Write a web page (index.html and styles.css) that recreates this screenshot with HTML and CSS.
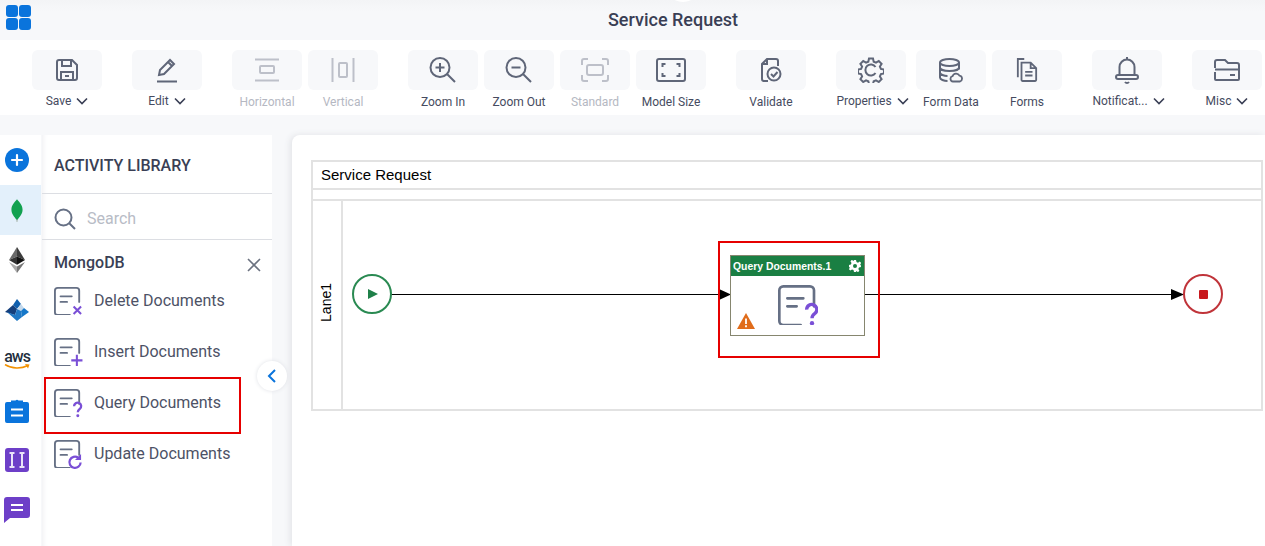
FILE: index.html
```html
<!DOCTYPE html>
<html lang="en">

<head>
    <meta charset="UTF-8">
    <title>Service Request</title>
    <link rel="stylesheet" href="styles.css">
</head>

<body>
    <svg class="defs" width="0" height="0">
        <symbol id="doc" viewBox="0 0 30 30">
            <path d="M27 16V4a3 3 0 0 0-3-3H4a3 3 0 0 0-3 3v23a3 3 0 0 0 3 3h13M7 10h12M7 16h7" fill="none" stroke="#667085" stroke-width="2" stroke-linecap="round" />
        </symbol>
        <symbol id="chev" viewBox="0 0 12 8">
            <path d="M1 1.500l5 5 5-5" fill="none" stroke="#3a3f55" stroke-width="1.600" />
        </symbol>
    </svg>

    <header class="topbar">
        <svg class="apps" width="26" height="26" viewBox="0 0 26 26">
            <rect x="0" y="0" width="12" height="12" rx="3" />
            <rect x="13" y="0" width="12" height="12" rx="3" />
            <rect x="0" y="13" width="12" height="12" rx="3" />
            <rect x="13" y="13" width="12" height="12" rx="3" />
        </svg>
        <div class="title">Service Request</div>
        <span class="handle"></span>
    </header>

    <nav class="toolbar">
        <div class="group">
            <div class="tool">
                <div class="tool-btn">
                    <svg width="24" height="24" viewBox="0 0 24 24">
                        <path d="M2 4a2 2 0 0 1 2-2h13l5 5v13a2 2 0 0 1-2 2H4a2 2 0 0 1-2-2zM7 2v6h9V2M6 22v-8h12v8M10 18h4" />
                    </svg>
                </div>
                <div class="tool-label drop">Save <svg class="chev" width="12" height="8"><use href="#chev" /></svg></div>
            </div>
        </div>
        <div class="group">
            <div class="tool">
                <div class="tool-btn">
                    <svg width="24" height="26" viewBox="0 0 24 26">
                        <path d="M4 18l1-5L15 3l4 4L9 17zM13 5l4 4M2 24.500h20" />
                    </svg>
                </div>
                <div class="tool-label drop">Edit <svg class="chev" width="12" height="8"><use href="#chev" /></svg></div>
            </div>
        </div>
        <div class="group">
            <div class="tool off">
                <div class="tool-btn">
                    <svg width="26" height="24" viewBox="0 0 26 24">
                        <path d="M1 1.500h24M1 22.500h24M7 8h12a1 1 0 0 1 1 1v5a1 1 0 0 1-1 1H7a1 1 0 0 1-1-1V9a1 1 0 0 1 1-1z" />
                    </svg>
                </div>
                <div class="tool-label">Horizontal</div>
            </div>
            <div class="tool off">
                <div class="tool-btn">
                    <svg width="24" height="26" viewBox="0 0 24 26">
                        <path d="M1.500 1v24M22.500 1v24M9 6h6a1 1 0 0 1 1 1v12a1 1 0 0 1-1 1H9a1 1 0 0 1-1-1V7a1 1 0 0 1 1-1z" />
                    </svg>
                </div>
                <div class="tool-label">Vertical</div>
            </div>
        </div>
        <div class="group">
            <div class="tool">
                <div class="tool-btn">
                    <svg width="28" height="28" viewBox="0 0 28 28">
                        <path d="M11 2a9.500 9.500 0 1 0 0 19a9.500 9.500 0 0 0 0-19zM18 18l8 8M11 7v9M6.500 11.500h9" />
                    </svg>
                </div>
                <div class="tool-label">Zoom In</div>
            </div>
            <div class="tool">
                <div class="tool-btn">
                    <svg width="28" height="28" viewBox="0 0 28 28">
                        <path d="M11 2a9.500 9.500 0 1 0 0 19a9.500 9.500 0 0 0 0-19zM18 18l8 8M6.500 11.500h9" />
                    </svg>
                </div>
                <div class="tool-label">Zoom Out</div>
            </div>
            <div class="tool off">
                <div class="tool-btn">
                    <svg width="28" height="24" viewBox="0 0 28 24">
                        <path d="M1 7V3a2 2 0 0 1 2-2h4M21 1h4a2 2 0 0 1 2 2v4M27 17v4a2 2 0 0 1-2 2h-4M7 23H3a2 2 0 0 1-2-2v-4M8 7h12a2 2 0 0 1 2 2v6a2 2 0 0 1-2 2H8a2 2 0 0 1-2-2V9a2 2 0 0 1 2-2z" />
                    </svg>
                </div>
                <div class="tool-label">Standard</div>
            </div>
            <div class="tool">
                <div class="tool-btn">
                    <svg width="30" height="24" viewBox="0 0 30 24">
                        <path d="M3 1h24a2 2 0 0 1 2 2v18a2 2 0 0 1-2 2H3a2 2 0 0 1-2-2V3a2 2 0 0 1 2-2zM6.500 9V6h3M20.500 6h3v3M23.500 15v3h-3M9.500 18h-3v-3" />
                    </svg>
                </div>
                <div class="tool-label">Model Size</div>
            </div>
        </div>
        <div class="group">
            <div class="tool">
                <div class="tool-btn">
                    <svg width="22" height="26" viewBox="0 0 22 26">
                        <path d="M8 24H4a2 2 0 0 1-2-2V7l5-5h9a2 2 0 0 1 2 2v5M2 7h5V2" />
                        <circle cx="14" cy="17" r="6.500" />
                        <path d="M11 17l2.500 2.500 4-4.500" />
                    </svg>
                </div>
                <div class="tool-label">Validate</div>
            </div>
        </div>
        <div class="group">
            <div class="tool props">
                <div class="tool-btn">
                    <svg width="26" height="26" viewBox="0 0 26 26">
                        <path d="M11 1.500h4l.7 3.200 2.300 1 2.800-1.700 2.800 2.800-1.700 2.800 1 2.300 3.100.7v3.800l-3.100.7-1 2.300 1.700 2.800-2.800 2.800-2.800-1.700-2.300 1-.7 2.700h-4l-.7-2.700-2.300-1-2.800 1.700-2.800-2.800 1.700-2.800-1-2.300-3.100-.7v-3.800l3.100-.7 1-2.300-1.700-2.800 2.800-2.800 2.800 1.700 2.300-1zM17.500 10a5.500 5.500 0 1 0 0 6" />
                    </svg>
                </div>
                <div class="tool-label drop nudge">Properties <svg class="chev" width="12" height="8"><use href="#chev" /></svg></div>
            </div>
            <div class="tool">
                <div class="tool-btn">
                    <svg width="24" height="25" viewBox="0 0 24 25">
                        <ellipse cx="10.500" cy="4.500" rx="9.500" ry="3.500" />
                        <path d="M1 4.500v15c0 2 4 3.500 7.500 3.500M20 4.500v7M1 9.500c0 2 4 3.500 9.500 3.500s9.500-1.500 9.500-3.500M1 14.500c0 2 4 3.500 7.500 3.500" />
                        <path class="thin" d="M14 23.500a2.700 2.700 0 0 1-.5-5.300 3.800 3.800 0 0 1 7-.5 3 3 0 0 1 .5 5.800z" />
                    </svg>
                </div>
                <div class="tool-label">Form Data</div>
            </div>
            <div class="tool">
                <div class="tool-btn">
                    <svg width="22" height="24" viewBox="0 0 24 26">
                        <path d="M9 1H2v20M6 5h10l6 6v13a1 1 0 0 1-1 1H7a1 1 0 0 1-1-1zM16 5v6h6M10 15h8M10 19h8" />
                    </svg>
                </div>
                <div class="tool-label">Forms</div>
            </div>
        </div>
        <div class="group">
            <div class="tool">
                <div class="tool-btn">
                    <svg width="24" height="28" viewBox="0 0 24 28">
                        <path d="M12 1v3M4.500 19v-8a7.500 7.500 0 0 1 15 0v8M3 19h18a2 2 0 0 1 0 4H3a2 2 0 0 1 0-4zM10 26a2.500 2.500 0 0 0 4 0" />
                    </svg>
                </div>
                <div class="tool-label drop notif">Notificat... <svg class="chev" width="12" height="8"><use href="#chev" /></svg></div>
            </div>
        </div>
        <div class="group">
            <div class="tool">
                <div class="tool-btn">
                    <svg width="26" height="22" viewBox="0 0 26 22">
                        <path d="M1 9V3a2 2 0 0 1 2-2h8l3 3h9a2 2 0 0 1 2 2v14a1 1 0 0 1-1 1H2a1 1 0 0 1-1-1v-7M1 10.500h24M16 16h5" />
                    </svg>
                </div>
                <div class="tool-label drop">Misc <svg class="chev" width="12" height="8"><use href="#chev" /></svg></div>
            </div>
        </div>
    </nav>

    <main class="main">
        <aside class="rail">
            <div class="rail-item">
                <svg width="24" height="24" viewBox="0 0 24 24">
                    <circle cx="12" cy="12" r="12" fill="#0a74dc" />
                    <path d="M12 7v10M7 12h10" stroke="#fff" stroke-width="2.200" stroke-linecap="round" />
                </svg>
            </div>
            <div class="rail-item active">
                <svg width="12" height="25" viewBox="0 0 14 26">
                    <path d="M7 0c3 3.500 6.500 7 6.500 12S10 20 7.500 24H6.500C4 20 .5 17 .5 12S4 3.500 7 0z" fill="#12a150" />
                    <path d="M6.400 23h1.200v3H6.400z" fill="#9aa79c" />
                </svg>
            </div>
            <div class="rail-item">
                <svg width="16" height="26" viewBox="0 0 16 26">
                    <path d="M8 0L0 13l8-3.500z" fill="#6a6a6a" />
                    <path d="M8 0l8 13-8-3.500z" fill="#3c3c3c" />
                    <path d="M0 13l8 4.700V9.500z" fill="#333" />
                    <path d="M16 13l-8 4.700V9.500z" fill="#111" />
                    <path d="M0 15l8 11v-6.500z" fill="#aaa" />
                    <path d="M16 15L8 26v-6.500z" fill="#777" />
                </svg>
            </div>
            <div class="rail-item">
                <svg width="24" height="22" viewBox="0 0 24 22">
                    <path d="M12 0l4 5-4 5-4-4z" fill="#0f5fae" />
                    <path d="M8 6l4 4-2 6L0 13z" fill="#143f7c" />
                    <path d="M16 5l3 4-3 3-4-2z" fill="#c4d9ec" />
                    <path d="M19 9l5 4-7 5-1-6z" fill="#1577c9" />
                    <path d="M10 16l2-6 4 2 1 6-5 4-10-9z" fill="#2078c4" />
                </svg>
            </div>
            <div class="rail-item">
                <div class="aws">aws
                    <svg width="26" height="6" viewBox="0 0 26 6">
                        <path d="M1 .5c7 4.500 16 4.500 23 1" fill="none" stroke="#f29100" stroke-width="1.500" />
                        <path d="M21 0l4.500.5-1.500 4z" fill="#f29100" />
                    </svg>
                </div>
            </div>
            <div class="rail-item">
                <svg width="24" height="26" viewBox="0 0 24 26">
                    <path d="M2 5h4V3.500h4.500a2 2 0 0 1 3 0H18V5h4a2 2 0 0 1 2 2v17a2 2 0 0 1-2 2H2a2 2 0 0 1-2-2V7a2 2 0 0 1 2-2z" fill="#0a74dc" />
                    <path d="M6 12.500h12M6 18.500h12" stroke="#fff" stroke-width="2.200" />
                </svg>
            </div>
            <div class="rail-item">
                <svg width="24" height="24" viewBox="0 0 24 24">
                    <rect width="24" height="24" rx="3" fill="#6d3fc8" />
                    <path d="M4.500 5h5M4.500 19h5M7 5v14M14.500 5h5M14.500 19h5M17 5v14" stroke="#e9e3f8" stroke-width="2" />
                </svg>
            </div>
            <div class="rail-item">
                <svg width="26" height="26" viewBox="0 0 26 26">
                    <path d="M3 0h20a3 3 0 0 1 3 3v15a3 3 0 0 1-3 3H6l-6 5V3a3 3 0 0 1 3-3z" fill="#6d3fc8" />
                    <path d="M7 8h12M7 13h12" stroke="#fff" stroke-width="2.200" />
                </svg>
            </div>
        </aside>

        <section class="library">
            <h2 class="lib-title">ACTIVITY LIBRARY</h2>
            <div class="lib-search">
                <svg width="22" height="22" viewBox="0 0 22 22">
                    <path d="M9.500 1.500a8 8 0 1 0 0 16a8 8 0 0 0 0-16zM15.500 15.500l5.500 5.500" fill="none" stroke="#667085" stroke-width="2" />
                </svg>
                <span>Search</span>
            </div>
            <div class="lib-group">
                <span>MongoDB</span>
                <svg width="14" height="14" viewBox="0 0 14 14">
                    <path d="M1 1l12 12M13 1L1 13" stroke="#6b7280" stroke-width="1.600" />
                </svg>
            </div>
            <div class="lib-item">
                <svg width="28" height="28" viewBox="0 0 30 30">
                    <use href="#doc" />
                    <path d="M21 21l8 8M29 21l-8 8" stroke="#7a4fd6" stroke-width="2.200" />
                </svg>
                <span>Delete Documents</span>
            </div>
            <div class="lib-item">
                <svg width="28" height="28" viewBox="0 0 30 30">
                    <use href="#doc" />
                    <path d="M24.500 18v12M18.500 24h12" stroke="#7a4fd6" stroke-width="2.200" />
                </svg>
                <span>Insert Documents</span>
            </div>
            <div class="lib-item picked">
                <svg width="28" height="28" viewBox="0 0 30 30">
                    <use href="#doc" />
                    <path d="M21.500 18.500a3.800 3.800 0 1 1 6 3c-1.400 1-2 1.700-2 3.500" fill="none" stroke="#7a4fd6" stroke-width="2.500" />
                    <circle cx="25.500" cy="28.600" r="1.600" fill="#7a4fd6" />
                </svg>
                <span>Query Documents</span>
            </div>
            <div class="lib-item">
                <svg width="28" height="28" viewBox="0 0 30 30">
                    <use href="#doc" />
                    <path d="M28.500 24a6 6 0 1 1-2.500-5" fill="none" stroke="#7a4fd6" stroke-width="2.400" />
                    <path d="M29 15v6.500h-6.500z" fill="#7a4fd6" />
                </svg>
                <span>Update Documents</span>
            </div>
            <button class="collapse">
                <svg width="10" height="16" viewBox="0 0 10 16">
                    <path d="M8 2L2 8l6 6" fill="none" stroke="#0a74dc" stroke-width="2" />
                </svg>
            </button>
        </section>

        <section class="canvas">
            <div class="pool">
                <div class="pool-title">Service Request</div>
                <div class="pool-strip"></div>
                <div class="lane">
                    <div class="lane-head"><span>Lane1</span></div>
                    <div class="lane-body">
                        <svg class="wires" width="920" height="208" viewBox="0 0 920 208">
                            <path d="M48 93.500h340M522 93.500h320" stroke="#000" stroke-width="1.200" fill="none" />
                            <path d="M376 88v11l12-5.500zM828 88v11l13-5.500z" fill="#000" />
                        </svg>
                        <div class="event start">
                            <svg width="12" height="12" viewBox="0 0 12 12"><path d="M1 1v10l10-5z" fill="#1f8049" /></svg>
                        </div>
                        <div class="picked-node">
                            <div class="node">
                                <div class="node-head">
                                    <span>Query Documents.1</span>
                                    <svg width="12" height="12" viewBox="0 0 24 24">
                                        <path d="M10 0h4l1 4 3 1.300 3.500-2.100 2.800 2.800-2.100 3.500L23.500 10 24 14l-4 1-1.300 3 2.100 3.500-2.800 2.800-3.500-2.100L14 24h-4l-1-3.800-3-1.200-3.500 2.100-2.800-2.800L1.800 15 0 14v-4l3.800-1L5 6 2.900 2.500 5.700-.300 9 2zM12 8a4 4 0 1 0 0 8 4 4 0 0 0 0-8z" fill="#fff" fill-rule="evenodd" />
                                    </svg>
                                </div>
                                <div class="node-body">
                                    <svg class="warn" width="18" height="16" viewBox="0 0 18 16">
                                        <path d="M9 0l9 16H0z" fill="#e06c1b" />
                                        <path d="M9 5.500v5.500M9 12.300v2" stroke="#fff" stroke-width="1.800" />
                                    </svg>
                                    <svg width="40" height="40" viewBox="0 0 30 30">
                                        <use href="#doc" />
                                        <path d="M21.500 18.500a3.800 3.800 0 1 1 6 3c-1.400 1-2 1.700-2 3.500" fill="none" stroke="#7a4fd6" stroke-width="2.500" />
                                        <circle cx="25.500" cy="28.600" r="1.600" fill="#7a4fd6" />
                                    </svg>
                                </div>
                            </div>
                        </div>
                        <div class="event end"><span class="end-dot"></span></div>
                    </div>
                </div>
            </div>
        </section>
    </main>
</body>

</html>
```

FILE: styles.css
```css
* {
    box-sizing: border-box;
}

html,
body {
    margin: 0;
    height: 546px;
    overflow: hidden;
}

body {
    background-color: #f7f8fa;
    font-family: Roboto, "Liberation Sans", sans-serif;
    color: #3a3f55;
}

.defs {
    position: absolute;
}

/* top bar */
.topbar {
    position: relative;
    height: 40px;
    display: flex;
    justify-content: center;
    align-items: center;
    padding-bottom: 2px;
    background: linear-gradient(#f3f4f6, #f7f8fa 12px);
}

.apps {
    position: absolute;
    left: 6px;
    top: 5px;
    fill: #0a74dc;
}

.title {
    font-size: 18px;
    font-weight: 500;
    margin-left: 81px;
}

.handle {
    position: absolute;
    left: 673px;
    top: -8px;
    width: 20px;
    height: 10px;
    border-radius: 50%;
    background-color: #fff;
}

/* toolbar */
.toolbar {
    height: 75px;
    background-color: #fff;
    display: flex;
    gap: 30px;
    padding: 10px 0 0 32px;
}

.group {
    display: flex;
    gap: 6px;
}

.tool {
    width: 70px;
    display: flex;
    flex-direction: column;
    align-items: center;
}

.props {
    margin-right: 4px;
}

.tool-btn {
    width: 70px;
    height: 40px;
    display: flex;
    justify-content: center;
    align-items: center;
    border-radius: 6px;
    background-color: #f7f8fa;
}

.tool-btn svg {
    fill: none;
    stroke: #5f6678;
    stroke-width: 2;
}

.tool-btn .thin {
    fill: #f7f8fa;
    stroke-width: 1.800;
}

.tool-label {
    margin-top: 5px;
    font-size: 12px;
    line-height: 14px;
    white-space: nowrap;
    color: #464b60;
}

.tool-label.drop {
    margin-top: 4px;
}

.notif {
    margin-left: 3px;
}

.nudge {
    margin-left: 3px;
}

.chev {
    margin-left: 2px;
    vertical-align: 0;
}

.off .tool-btn svg {
    stroke: #bdc0c9;
}

.off .tool-label {
    color: #b5b8c2;
}

/* left side */
.main {
    display: flex;
    height: 431px;
    padding-top: 20px;
}

.rail {
    width: 41px;
    background-color: #fff;
    flex-shrink: 0;
}

.rail-item {
    height: 50px;
    display: flex;
    justify-content: center;
    align-items: center;
    padding-right: 7px;
}

.rail-item.active {
    background-color: #e3f0fb;
}

.aws {
    font-size: 16px;
    line-height: 13px;
    font-weight: 500;
    letter-spacing: -1px;
    color: #232f3e;
    text-align: center;
}

.aws svg {
    display: block;
    margin-top: 1px;
}

.library {
    position: relative;
    width: 230px;
    margin-left: 1px;
    background-color: #fff;
    box-shadow: inset 6px 0 6px -6px #e8e9ed;
    flex-shrink: 0;
}

.lib-title {
    margin: 0;
    height: 59px;
    padding: 21px 0 0 12px;
    font-size: 16px;
    line-height: 19px;
    font-weight: 500;
    border-bottom: 1px solid #dcdee3;
}

.lib-search {
    height: 46px;
    display: flex;
    align-items: center;
    gap: 11px;
    padding: 4px 0 0 12px;
    font-size: 16px;
    color: #b8bcc6;
    border-bottom: 1px solid #dcdee3;
}

.lib-group {
    height: 35px;
    display: flex;
    justify-content: space-between;
    padding: 13px 11px 0 12px;
    font-size: 16px;
    line-height: 19px;
    font-weight: 500;
}

.lib-group svg {
    margin-top: 5px;
}

.lib-item {
    height: 51px;
    display: flex;
    align-items: center;
    gap: 12px;
    padding-left: 12px;
    font-size: 16px;
    color: #4d5266;
}

.lib-item svg {
    overflow: visible;
}

.lib-item.picked {
    position: relative;
}

.lib-item.picked::after {
    content: "";
    box-sizing: border-box;
    position: absolute;
    left: 2px;
    top: 0;
    width: 197px;
    height: 57px;
    border: 2px solid #e60000;
}

.collapse {
    position: absolute;
    right: -15px;
    top: 226px;
    width: 30px;
    height: 30px;
    padding: 0;
    display: flex;
    justify-content: center;
    align-items: center;
    border: none;
    border-radius: 50%;
    background-color: #fff;
    box-shadow: 0 0 4px #dfe1e6;
}

/* canvas */
.canvas {
    flex: 1;
    margin-left: 20px;
    padding: 25px 2px 0 19px;
    background-color: #fff;
    border-radius: 8px 0 0 0;
    box-shadow: -2px 0 6px #e3e4e8;
    font-family: "Liberation Sans", Arial, sans-serif;
    color: #000;
}

.pool {
    border: 2px solid #e2e2e2;
    height: 251px;
    display: flex;
    flex-direction: column;
}

.pool-title {
    height: 28px;
    padding: 4px 0 0 8px;
    font-size: 15px;
    line-height: 17px;
    border-bottom: 2px solid #e2e2e2;
}

.pool-strip {
    height: 11px;
    border-bottom: 2px solid #e2e2e2;
}

.lane {
    flex: 1;
    display: flex;
}

.lane-head {
    width: 30px;
    display: flex;
    justify-content: center;
    align-items: center;
    padding: 0 3px 6px 0;
    border-right: 2px solid #e2e2e2;
    font-size: 14px;
}

.lane-head span {
    writing-mode: vertical-rl;
    transform: rotate(180deg);
}

.lane-body {
    position: relative;
    flex: 1;
}

.wires {
    position: absolute;
    left: 0;
    top: 0;
}

.event {
    position: absolute;
    top: 73px;
    width: 40px;
    height: 40px;
    display: flex;
    justify-content: center;
    align-items: center;
    border-radius: 50%;
    background-color: #fff;
}

.event.start {
    left: 9px;
    border: 2px solid #2a8a52;
}

.event.start svg {
    margin-left: 2px;
}

.event.end {
    left: 840px;
    border: 2px solid #c0343a;
}

.end-dot {
    width: 9px;
    height: 9px;
    border-radius: 1px;
    background-color: #c8191e;
}

.picked-node {
    position: absolute;
    left: 375px;
    top: 40px;
    width: 162px;
    height: 117px;
    padding: 12px 0 0 10px;
    border: 2px solid #e60000;
}

.node {
    width: 135px;
    height: 81px;
    border: 1px solid #86866f;
    background-color: #fff;
}

.node-head {
    height: 20px;
    display: flex;
    justify-content: space-between;
    align-items: center;
    padding: 0 3px 0 2px;
    background-color: #1a7f43;
    color: #fff;
    font-size: 10.400px;
    font-weight: 700;
}

.node-body {
    position: relative;
    height: 59px;
    display: flex;
    justify-content: center;
    padding-top: 9px;
}

.warn {
    position: absolute;
    left: 6px;
    bottom: 6px;
}
```
